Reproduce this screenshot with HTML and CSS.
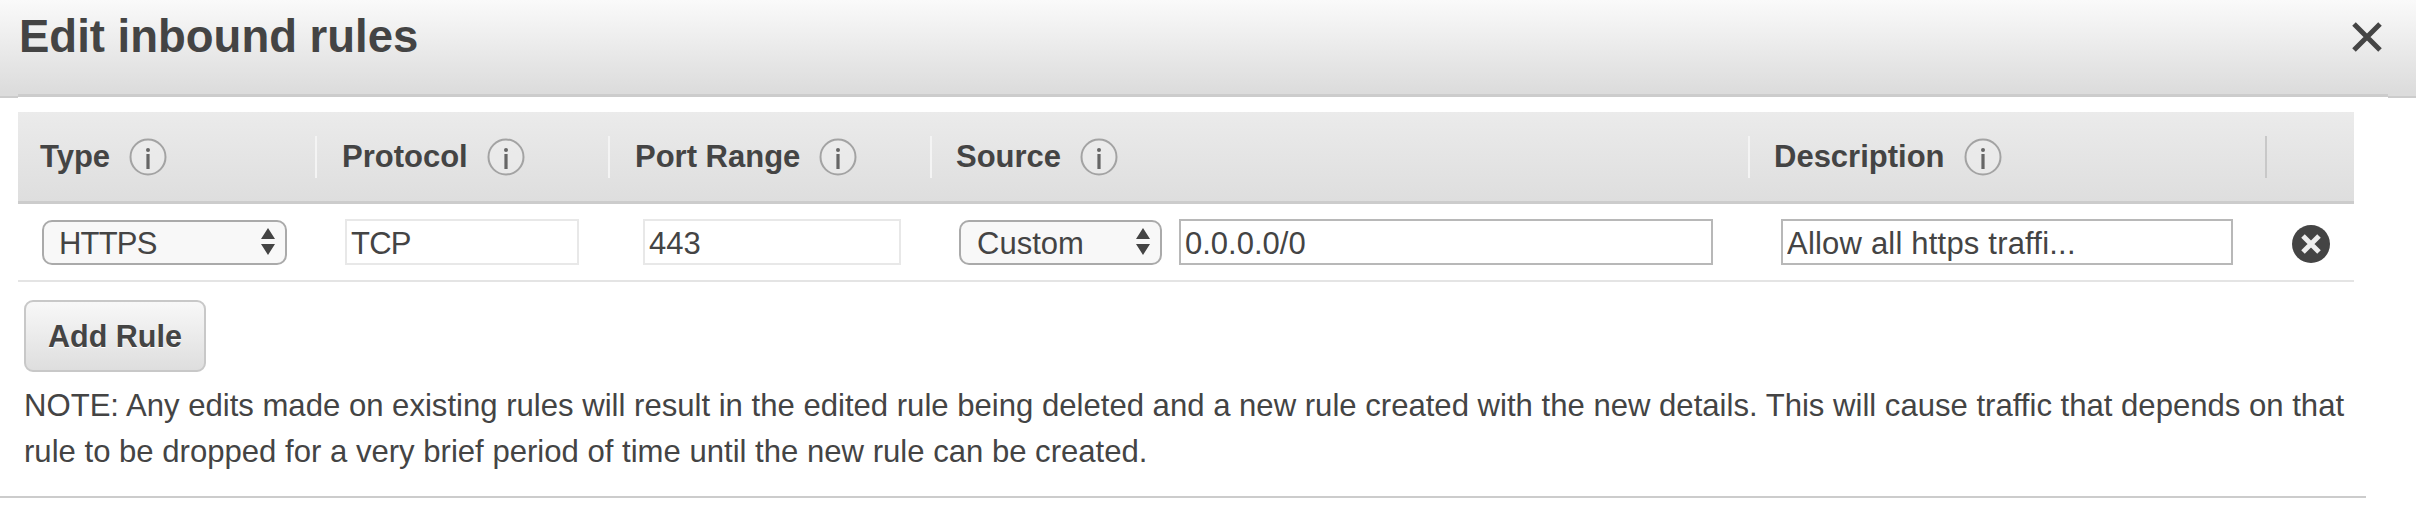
FILE: index.html
```html
<!DOCTYPE html>
<html lang="en">
<head>
<meta charset="utf-8">
<title>Edit inbound rules</title>
<link rel="stylesheet" href="styles.css">
</head>
<body>
<svg class="defs" width="0" height="0" aria-hidden="true">
  <symbol id="info" viewBox="0 0 38 38">
    <circle cx="19" cy="19" r="17.5" fill="#f0f0f0" fill-opacity=".5" stroke="#a3a3a3" stroke-width="2"/>
    <circle cx="19" cy="12" r="2" fill="#666"/>
    <rect x="17.4" y="16" width="3.2" height="15" fill="#666"/>
  </symbol>
  <symbol id="updown" viewBox="0 0 14 28">
    <path d="M7 0 L14 11 H0 Z M0 16 H14 L7 27 Z" fill="#444"/>
  </symbol>
</svg>
<main class="dialog">
  <header class="dialog-head">
    <h1 class="dialog-title">Edit inbound rules</h1>
    <button class="close" type="button" aria-label="Close">
      <svg viewBox="0 0 30 30" width="30" height="30"><path d="M2 2 L28 28 M28 2 L2 28" stroke="#444" stroke-width="5" fill="none"/></svg>
    </button>
  </header>
  <section class="rules">
    <div class="grid rules-head">
      <div class="th"><span>Type</span><svg class="info"><use href="#info"/></svg></div>
      <div class="th"><span>Protocol</span><svg class="info"><use href="#info"/></svg></div>
      <div class="th"><span>Port Range</span><svg class="info"><use href="#info"/></svg></div>
      <div class="th"><span>Source</span><svg class="info"><use href="#info"/></svg></div>
      <div class="th"><span>Description</span><svg class="info"><use href="#info"/></svg></div>
      <div class="th th-last"></div>
    </div>
    <div class="grid rules-row">
      <div class="td td-type">
        <div class="select select-type">
          <select><option>HTTPS</option></select>
          <svg class="updown"><use href="#updown"/></svg>
        </div>
      </div>
      <div class="td td-proto"><input class="input input-off input-proto" value="TCP" readonly></div>
      <div class="td td-port"><input class="input input-off input-port" value="443" readonly></div>
      <div class="td td-source">
        <div class="select select-source">
          <select><option>Custom</option></select>
          <svg class="updown"><use href="#updown"/></svg>
        </div>
        <input class="input input-cidr" value="0.0.0.0/0">
      </div>
      <div class="td td-desc"><input class="input input-desc" value="Allow all https traffi..."></div>
      <div class="td td-del">
        <svg class="del" viewBox="0 0 38 38" width="38" height="38"><circle cx="19" cy="19" r="19" fill="#444"/><path d="M11 11 L27 27 M27 11 L11 27" stroke="#eee" stroke-width="5" fill="none"/></svg>
      </div>
    </div>
  </section>
  <button class="add" type="button">Add Rule</button>
  <p class="note">NOTE: Any edits made on existing rules will result in the edited rule being deleted and a new rule created with the new details. This will cause traffic that depends on that rule to be dropped for a very brief period of time until the new rule can be created.</p>
  <hr class="rule-end">
</main>
</body>
</html>
```
FILE: styles.css
```css
* { box-sizing: border-box; }
html, body { margin: 0; padding: 0; background: #fff; }
body { font-family: "Liberation Sans", Arial, sans-serif; color: #444; width: 2416px; height: 514px; overflow: hidden; }
.defs { position: absolute; }

.dialog-head {
  position: relative;
  display: flex;
  justify-content: space-between;
  align-items: flex-start;
  height: 98px;
  padding: 14px 34px 0 19px;
  background: linear-gradient(#fafafa, #dcdcdc 96%);
  border-bottom: 2px solid #ccc;
}
.dialog-head::after {
  content: "";
  position: absolute;
  left: 18px;
  right: 28px;
  top: 94px;
  height: 4px;
  border-top: 3px solid #ccc;
  background: #fff;
}
.dialog-title { margin: 0; font-size: 45.5px; line-height: 45px; font-weight: 700; color: #444; }
.close { padding: 0; margin: 8px 0 0; border: 0; background: none; width: 30px; height: 30px; display: block; }
.close svg { display: block; }

.rules { margin: 14px 0 0 18px; width: 2336px; }
.grid { display: grid; grid-template-columns: 299px 293px 322px 818px 517px 87px; }
.rules-head {
  height: 92px;
  align-items: center;
  background: linear-gradient(#ebebeb, #dedede);
  border-bottom: 3px solid #ccc;
}
.th {
  display: flex;
  align-items: center;
  gap: 19px;
  height: 42px;
  font-size: 31px;
  font-weight: 700;
  padding-left: 24px;
  border-right: 2px solid #f4f4f4;
}
.th:nth-child(2), .th:nth-child(3) { padding-left: 25px; }
.th:nth-child(4), .th:nth-child(5) { padding-left: 24px; }
.th:nth-child(1) { padding-left: 22px; }
.th:nth-child(5) { border-right-color: #c8c8c8; }
.th-last { border-right: 0; }
.info { width: 38px; height: 38px; flex: none; }

.rules-row { height: 78px; align-items: center; border-bottom: 2px solid #e4e4e4; }
.td { display: flex; align-items: center; }
.td-type { padding-left: 24px; }
.td-proto { padding-left: 28px; }
.td-port { padding-left: 33px; }
.td-source { padding-left: 27px; gap: 17px; }
.td-desc { padding-left: 31px; }
.td-del { padding: 4px 0 0 25px; }

.select { position: relative; height: 45px; margin-top: 1px; }
.select select {
  appearance: none;
  -webkit-appearance: none;
  display: block;
  width: 100%;
  height: 100%;
  padding: 2px 0 0 16px;
  font: 31px "Liberation Sans", Arial, sans-serif;
  color: #444;
  background: #f8f8f8;
  border: 2px solid #aaa;
  border-radius: 10px;
}
.select-type { width: 245px; }
.select-type select { padding-left: 15px; letter-spacing: -.8px; }
.select-source { width: 203px; }
.updown { position: absolute; right: 12px; top: 8px; width: 14px; height: 28px; }

.input {
  height: 46px;
  padding: 3px 4px 0;
  font: 31px "Liberation Sans", Arial, sans-serif;
  color: #444;
  background: #fff;
  border: 2px solid #b8b8b8;
  border-radius: 0;
  outline: 0;
}
.input-off { border-color: #e8e8e8; }
.input-proto { width: 234px; letter-spacing: -.8px; }
.input-port { width: 258px; }
.input-cidr { width: 534px; }
.input-desc { width: 452px; letter-spacing: .2px; }
.del { display: block; }

.add {
  display: block;
  margin: 18px 0 0 24px;
  width: 182px;
  height: 72px;
  padding: 0;
  font: 700 30.5px "Liberation Sans", Arial, sans-serif;
  color: #444;
  text-shadow: 0 1px 0 #fff;
  background: linear-gradient(#f8f8f8, #dedede);
  border: 2px solid #c8c8c8;
  border-radius: 9px;
}
.note { margin: 11px 0 0 24px; width: 2330px; font-size: 31.1px; line-height: 46px; color: #444; }
.rule-end { margin: 21px 0 0; width: 2366px; height: 2px; border: 0; background: #ccc; }
```
